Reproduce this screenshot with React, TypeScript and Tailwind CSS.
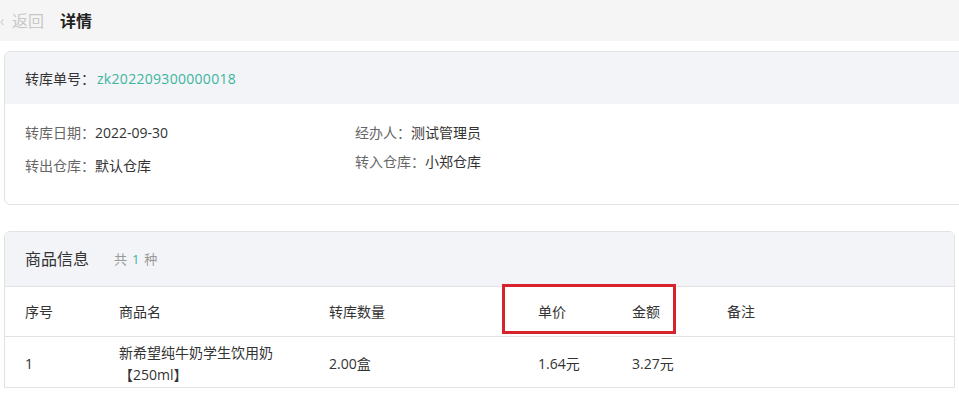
import React from "react";

export default function App() {
  const font = { fontFamily: '"Open Sans", "Noto Sans CJK SC", "Noto Sans", sans-serif' };
  return (
    <div className="w-[959px] h-[395px] overflow-hidden bg-white relative" style={font}>
      <div className="h-[41px] bg-[#f5f5f5] flex items-center">
        <span className="text-[14px] text-[#cfcfcf] ml-[0px] w-[12px]">‹</span>
        <span className="text-[16px] text-[#c8c8c8]">返回</span>
        <span className="text-[16px] text-[#222] font-semibold ml-[16px]">详情</span>
      </div>

      <div className="ml-[4px] mt-[10px] w-[975px] border border-[#e2e2e2] rounded-[6px] overflow-hidden">
        <div className="h-[52px] bg-[#f3f4f7] flex items-center px-[20px] text-[14px]">
          <span className="text-[#333]">转库单号：</span>
          <span className="text-[#3cb4a0] ml-[2px] tracking-[0.3px]">zk202209300000018</span>
        </div>
        <div className="flex pl-[20px] pt-[18px] pb-[27px] text-[14px] leading-[22px]">
          <div className="w-[330px] flex flex-col gap-[11px]">
            <div>
              <span className="text-[#666]">转库日期：</span>
              <span className="text-[#333]">2022-09-30</span>
            </div>
            <div>
              <span className="text-[#666]">转出仓库：</span>
              <span className="text-[#333]">默认仓库</span>
            </div>
          </div>
          <div className="flex flex-col gap-[7px]">
            <div>
              <span className="text-[#666]">经办人：</span>
              <span className="text-[#333]">测试管理员</span>
            </div>
            <div>
              <span className="text-[#666]">转入仓库：</span>
              <span className="text-[#333]">小郑仓库</span>
            </div>
          </div>
        </div>
      </div>

      <div className="ml-[4px] mt-[26px] w-[951px] border border-[#e2e2e2] rounded-t-[6px] overflow-hidden">
        <div className="h-[55px] bg-[#f3f4f7] flex items-center px-[20px] border-b border-[#e2e2e2]">
          <span className="text-[16px] text-[#333]">商品信息</span>
          <span className="text-[13px] text-[#999] ml-[25px] mt-[1px]">
            共 <span className="text-[#3cb4a0] mx-[1.5px]">1</span> 种
          </span>
        </div>
        <div className="flex h-[50px] items-center pl-[20px] text-[14px] text-[#333] border-b border-[#e2e2e2]">
          <div className="w-[94px]">序号</div>
          <div className="w-[210px]">商品名</div>
          <div className="w-[209px]">转库数量</div>
          <div className="w-[94px]">单价</div>
          <div className="w-[95px]">金额</div>
          <div>备注</div>
        </div>
        <div className="flex h-[50px] items-center pl-[20px] pt-[3px] text-[14px] text-[#333] leading-[22px]">
          <div className="w-[94px]">1</div>
          <div className="w-[210px]">
            <div className="w-[160px]">新希望纯牛奶学生饮用奶【250ml】</div>
          </div>
          <div className="w-[209px]">2.00盒</div>
          <div className="w-[94px]">1.64元</div>
          <div className="w-[95px]">3.27元</div>
          <div></div>
        </div>
      </div>

      <div className="absolute left-[502px] top-[284px] w-[174px] h-[50px] border-[3px] border-[#d7232e]"></div>
    </div>
  );
}
